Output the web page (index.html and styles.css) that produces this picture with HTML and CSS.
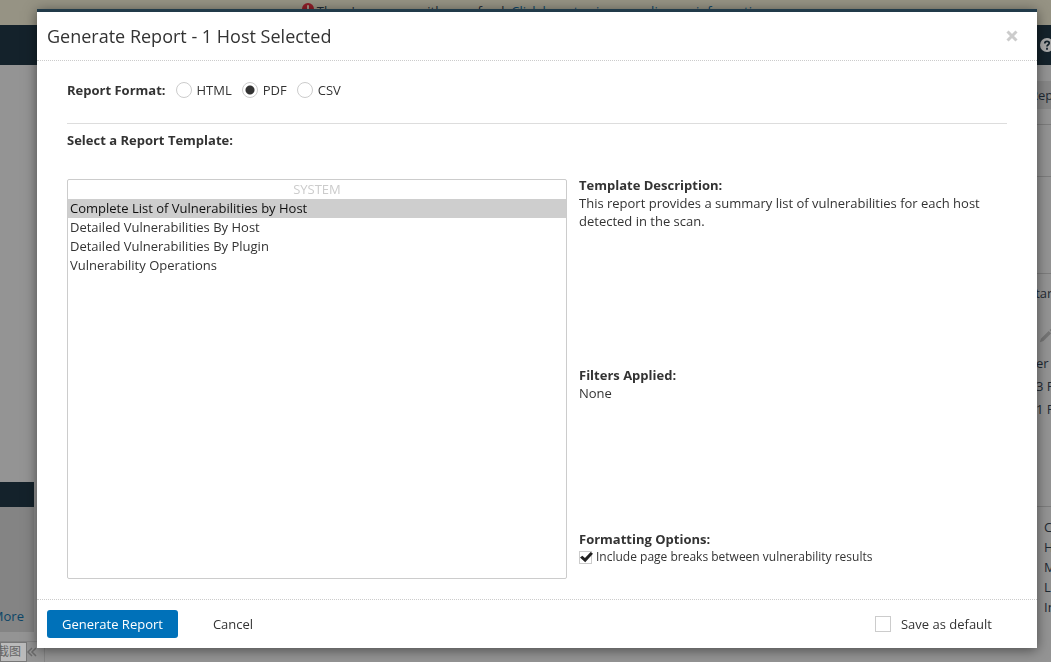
FILE: index.html
```html
<!DOCTYPE html>
<html lang="en">
<head>
<meta charset="utf-8">
<title>Generate Report</title>
<link rel="stylesheet" href="styles.css">
</head>
<body>
<div class="page" aria-hidden="true">
  <div class="banner">
    <svg class="alert-icon" viewBox="0 0 14 14"><circle cx="7" cy="7" r="7" fill="#8f1d27"/><path d="M7 2.500v5.500M7 9.500v2" stroke="#aaa695" stroke-width="2"/></svg>
    <span>There's an error with your feed. <span class="banner-link">Click here to view your license information.</span></span>
  </div>
  <div class="nav">
    <svg class="help-icon" viewBox="0 0 14 14"><circle cx="7" cy="7" r="7" fill="#aaa"/><path d="M4.800 5.400C4.800 2.500 9.400 2.700 9.200 5.200 9.100 6.800 7 6.600 7 8.600M7 9.800v2" fill="none" stroke="#14222b" stroke-width="1.800"/></svg>
  </div>
  <div class="columns">
    <div class="side">
      <div class="side-head"></div>
      <div class="side-card"><span class="more">More</span></div>
      <div class="side-foot">
        <span class="shot-tip">截图</span>
        <svg class="collapse" viewBox="0 0 10 10"><path d="M5 1 1 5l4 4M9 1 5 5l4 4" fill="none" stroke="#6b6b6b" stroke-width="1.500"/></svg>
      </div>
    </div>
    <div class="details">
      <div class="detail-tools"><span class="tool">Report</span></div>
      <div class="detail-row"></div>
      <div class="detail-gap"></div>
      <div class="detail-info">
        <span class="info-start">Start</span>
        <svg class="pencil" viewBox="0 0 16 16"><path d="M1 15l1.200-4L11 2.200l2.800 2.800L5 13.800zM12 1.200 13.200 0 16 2.800 14.800 4z" fill="#757575"/></svg>
        <span class="info-end">er</span>
        <span>3 F</span>
        <span>1 F</span>
      </div>
      <div class="levels"><span>Critical</span><span>High</span><span>Medium</span><span>Low</span><span>Info</span></div>
    </div>
  </div>
</div>

<div class="overlay">
  <form class="modal" role="dialog" aria-labelledby="title">
    <header class="modal-head">
      <h1 class="title" id="title">Generate Report - 1 Host Selected</h1>
      <button class="close" type="button" aria-label="Close">
        <svg viewBox="0 0 12 12"><path d="M1.500 1.500l9 9M10.500 1.500l-9 9" stroke="#ccc" stroke-width="3"/></svg>
      </button>
    </header>
    <div class="modal-body">
      <div class="formats" role="radiogroup" aria-labelledby="format">
        <span class="label" id="format">Report Format:</span>
        <label class="choice"><input class="radio" type="radio" name="format">HTML</label>
        <label class="choice"><input class="radio" type="radio" name="format" checked>PDF</label>
        <label class="choice"><input class="radio" type="radio" name="format">CSV</label>
      </div>
      <label class="label template-label" for="template">Select a Report Template:</label>
      <div class="template">
        <select class="list" id="template" size="20">
          <option class="group" disabled>SYSTEM</option>
          <option selected>Complete List of Vulnerabilities by Host</option>
          <option>Detailed Vulnerabilities By Host</option>
          <option>Detailed Vulnerabilities By Plugin</option>
          <option>Vulnerability Operations</option>
        </select>
        <div class="info">
          <section class="description">
            <h2 class="label">Template Description:</h2>
            <p>This report provides a summary list of vulnerabilities for each host detected in the scan.</p>
          </section>
          <section class="filters">
            <h2 class="label">Filters Applied:</h2>
            <p>None</p>
          </section>
          <section>
            <h2 class="label">Formatting Options:</h2>
            <label class="option"><input class="check small" type="checkbox" checked>Include page breaks between vulnerability results</label>
          </section>
        </div>
      </div>
    </div>
    <footer class="modal-foot">
      <button class="primary" type="button">Generate Report</button>
      <button class="cancel" type="button">Cancel</button>
      <label class="default"><input class="check" type="checkbox">Save as default</label>
    </footer>
  </form>
</div>
</body>
</html>
```
FILE: styles.css
```css
* { box-sizing: border-box; }
body {
  margin: 0;
  height: 100vh;
  overflow: hidden;
  font: 13px/18px "Open Sans", "Noto Sans CJK SC", sans-serif;
  color: #333;
}
h1, h2, p { margin: 0; }
button, select, input { font: inherit; color: inherit; margin: 0; }

/* dimmed page */
.page {
  height: 100vh;
  display: flex;
  flex-direction: column;
  background: #949494;
  color: #1f2a33;
  overflow: hidden;
}
.banner {
  height: 25px;
  display: flex;
  justify-content: center;
  gap: 3px;
  padding: 2px 0 0 22px;
  background: #969384;
}
.banner-link, .more { color: #0c4567; }
.alert-icon { width: 12px; height: 12px; margin-top: 1px; }
.nav {
  height: 40px;
  display: flex;
  justify-content: flex-end;
  align-items: center;
  background: #14222b;
}
.help-icon { width: 14px; height: 14px; margin-right: -3px; }
.columns { flex: 1; display: flex; justify-content: space-between; min-height: 0; }
.side {
  width: 45px;
  display: flex;
  flex-direction: column;
  justify-content: flex-end;
}
.side-head { width: 34px; height: 25px; background: #14222b; }
.side-card {
  width: 34px;
  height: 125px;
  padding: 0 10px 7px 0;
  display: flex;
  justify-content: flex-end;
  align-items: flex-end;
  background: #848484;
}
.side-foot {
  height: 21px;
  margin-top: 9px;
  display: flex;
  align-items: center;
  border: solid #848484;
  border-width: 1px 1px 0 0;
}
.shot-tip {
  width: 27px;
  display: flex;
  justify-content: flex-end;
  padding-right: 5px;
  background: #bbb;
  border: 1px solid #777;
  color: #666;
  font-size: 12px;
  white-space: nowrap;
}
.collapse { width: 10px; height: 10px; }
.details { width: 23px; white-space: nowrap; }
.detail-tools { height: 60px; padding-top: 16px; border-bottom: 1px solid #7d7d7d; }
.tool { display: block; padding: 5px 0 5px 2px; background: #878787; }
.detail-row { height: 52px; border-bottom: 1px solid #7d7d7d; }
.detail-gap { height: 97px; border-bottom: 1px solid #7d7d7d; }
.detail-info {
  height: 233px;
  padding: 10px 0 0 8px;
  display: flex;
  flex-direction: column;
  gap: 5px;
  border-bottom: 1px solid #7d7d7d;
}
.info-start { margin-left: -8px; }
.info-end { margin-top: 6px; }
.pencil { width: 14px; height: 14px; flex: none; margin: 22px 0 0 3px; }
.levels { padding: 10px 0 0 16px; display: flex; flex-direction: column; line-height: 20px; }

/* dialog */
.overlay { position: fixed; inset: 0; padding: 9px 14px 14px 37px; }
.modal {
  height: 100%;
  display: flex;
  flex-direction: column;
  background: #fff;
  border-top: 3px solid #213a49;
  box-shadow: 0 2px 12px rgba(0, 0, 0, 0.5);
}
.modal-head {
  display: flex;
  justify-content: space-between;
  align-items: center;
  height: 49px;
  padding: 0 18px 0 10px;
  border-bottom: 1px dotted #ccc;
}
.title { font-size: 18px; line-height: 24px; font-weight: 400; }
.close { width: 14px; height: 14px; padding: 1px; border: 0; background: none; }
.close svg { display: block; }
.modal-body { flex: 1; display: flex; flex-direction: column; padding: 20px 30px; min-height: 0; }
.label { font-size: 13px; font-weight: 700; }
.formats {
  display: flex;
  align-items: center;
  gap: 10px;
  padding-bottom: 24px;
  border-bottom: 1px solid #ddd;
}
.choice { display: flex; align-items: center; gap: 5px; }
.radio {
  appearance: none;
  width: 16px;
  height: 16px;
  border: 1px solid #ccc;
  border-radius: 50%;
}
.radio:checked { background: radial-gradient(circle, #333 4px, transparent 5px); }
.template-label { padding: 7px 0 27px; }
.template { flex: 1; display: flex; gap: 12px; min-height: 0; }
.list {
  width: 500px;
  margin-top: 3px;
  border: 1px solid #ccc;
  border-radius: 2px;
  background: #fff;
  outline: 0;
}
.list option { padding: 0 2px 1px; }
.group { color: #ccc; text-align: center; }
.info { flex: 1; }
.description { height: 190px; }
.filters { height: 164px; }
.option { display: flex; align-items: center; gap: 4px; font-size: 12px; }
.check {
  appearance: none;
  width: 16px;
  height: 16px;
  border: 1px solid #ccc;
}
.small { position: relative; width: 13px; height: 13px; }
.small:checked::after {
  content: "";
  position: absolute;
  inset: 0 -2px 0 0;
  background: #222;
  clip-path: polygon(0 55%, 18% 38%, 38% 58%, 82% 4%, 100% 20%, 40% 98%);
}
.modal-foot {
  display: flex;
  align-items: center;
  height: 49px;
  padding: 0 45px 0 10px;
  border-top: 1px dotted #ccc;
}
.primary {
  height: 28px;
  padding: 0 15px;
  border: 0;
  border-radius: 3px;
  background: #0071b9;
  color: #fff;
}
.cancel { padding: 0; margin-left: 35px; border: 0; background: none; }
.default { display: flex; align-items: center; gap: 10px; margin-left: auto; }
```
